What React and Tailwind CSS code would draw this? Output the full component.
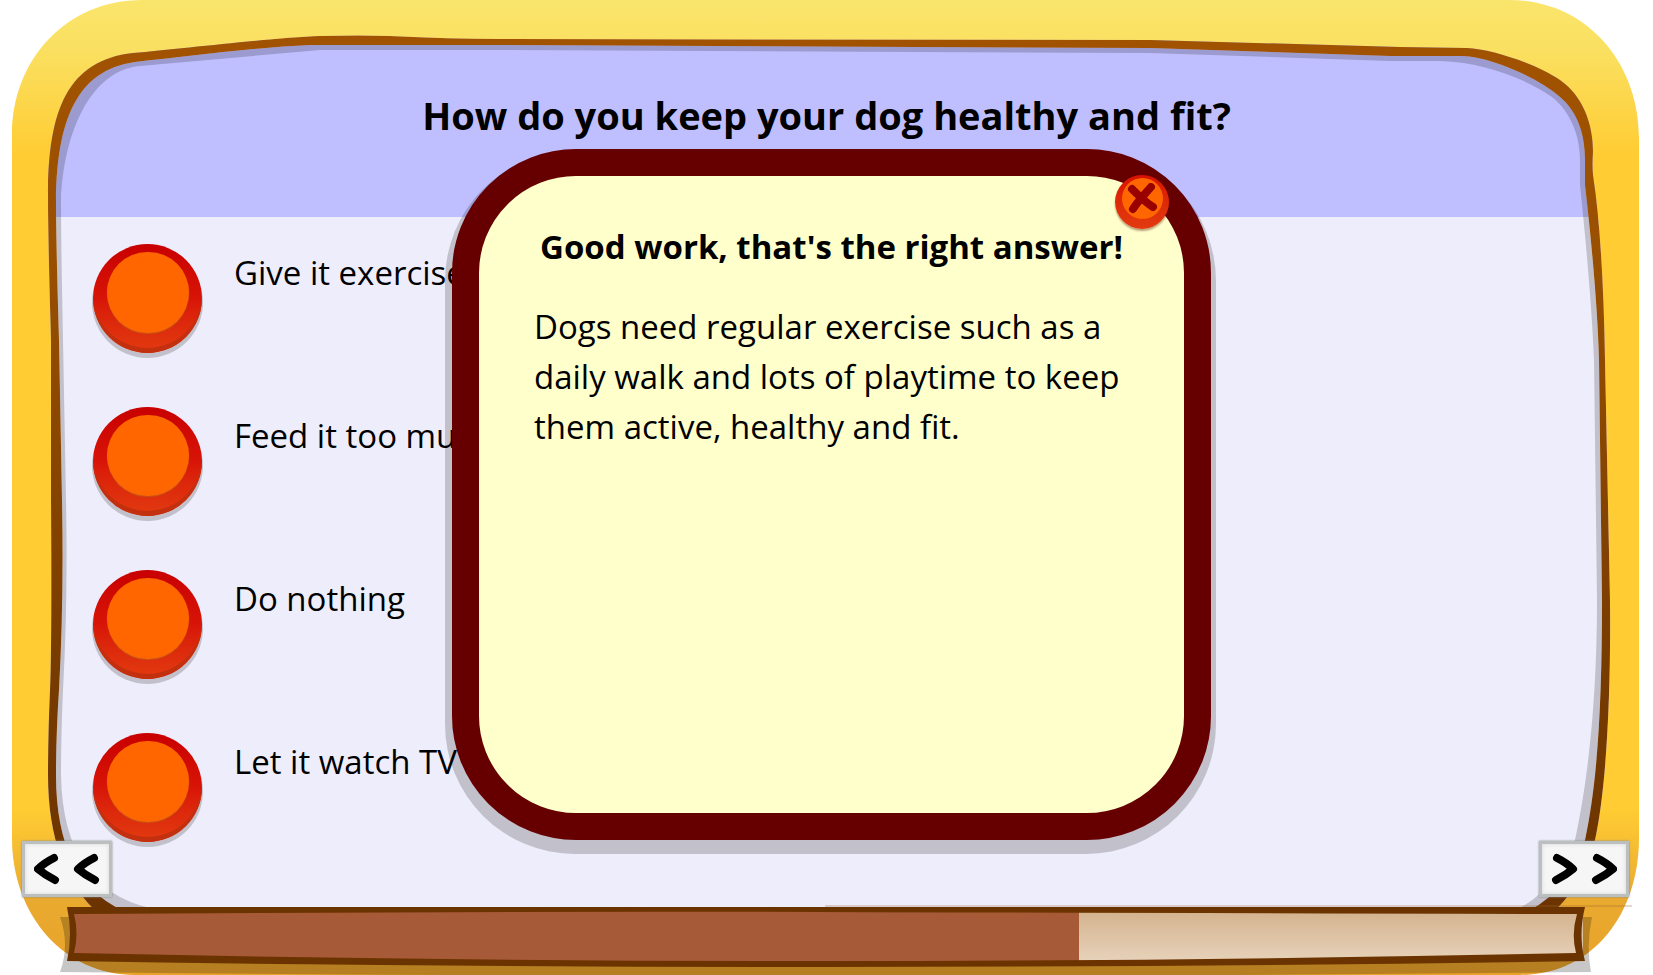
import { useState } from "react";

const QUESTION = "How do you keep your dog healthy and fit?";

const ANSWERS = [
  { id: "exercise", text: "Give it exercise" },
  { id: "food", text: "Feed it too much" },
  { id: "nothing", text: "Do nothing" },
  { id: "tv", text: "Let it watch TV" },
];

const PROGRESS = { done: 2, total: 3 };

// Hand-drawn outlines of the board, from the outside in
const FRAME =
  "M12 135 C12 60 66 0 142 0 H1509 C1586 0 1639 62 1639 138 V838 C1639 915 1592 975 1520 975 H135 C64 975 12 915 12 838 Z";
const RIM =
  "M48 195 C48 110 68 60 133 53 C180 49 270 38 320 36 Q360 35 390 36 Q450 39 500 39 L1150 40 L1400 47 L1467 48 C1492 49 1536 64 1560 80 C1583 96 1593 124 1593 152 Q1592 165 1593 175 Q1603 240 1605 360 L1610 600 C1611 700 1606 790 1595 840 Q1580 890 1550 915 H100 Q48 870 48 775 Q48 735 50 690 Q52 640 51 500 L51 340 Q48 240 48 195 Z";
const SURFACE =
  "M56 200 C57 122 76 70 135 62 C190 56 260 47 310 45 Q350 45 500 45 L1150 48 L1390 56 L1462 56 C1492 57 1538 78 1560 97 C1578 112 1585 135 1585 160 Q1585 175 1585 185 Q1597 290 1599 360 L1602 600 C1602 700 1598 780 1585 840 Q1568 890 1530 910 H122 Q56 880 56 775 Q56 735 59 690 Q64 600 62 500 L59 340 Q56 240 56 200 Z";
const SHADOW =
  "M61 200 C64 130 92 70 140 66 L320 50 H500 L1150 53 L1390 61 H1440 C1485 62 1530 81 1552 97 C1572 113 1580 138 1580 160 V185 Q1591 290 1594 360 L1597 600 C1597 700 1588 780 1575 840 Q1560 885 1520 908 H150 Q63 888 61 775 Q61 735 63 690 Q68 600 66 500 L63 340 Q61 240 61 200 Z";
const TRAY_OUTER = "M67 907 H1585 Q1578 935 1585 961 Q1200 967 820 967 Q440 967 67 961 Q73 934 67 907 Z";
const TRAY_INNER = "M74 914 Q500 911 820 912 T1577 914 Q1571 934 1576 953 Q1200 961 820 961 Q440 961 74 953 Q79 934 74 914 Z";

function BoardFrame() {
  return (
    <svg
      className="pointer-events-none absolute inset-0 h-full w-full"
      viewBox="0 0 1653 975"
      preserveAspectRatio="none"
      aria-hidden="true"
    >
      <defs>
        <linearGradient id="wood" x1="0" y1="0" x2="0" y2="975" gradientUnits="userSpaceOnUse">
          <stop offset="0" stopColor="#fae56c" />
          <stop offset="0.05" stopColor="#fae061" />
          <stop offset="0.16" stopColor="#ffcc33" />
          <stop offset="0.83" stopColor="#ffcc33" />
          <stop offset="0.92" stopColor="#e9aa30" />
          <stop offset="1" stopColor="#e9a22a" />
        </linearGradient>
        <linearGradient id="rim" x1="0" y1="0" x2="0" y2="975" gradientUnits="userSpaceOnUse">
          <stop offset="0" stopColor="#a35300" />
          <stop offset="0.25" stopColor="#995000" />
          <stop offset="0.7" stopColor="#773b00" />
          <stop offset="1" stopColor="#693100" />
        </linearGradient>
      </defs>
      <path d={`${SURFACE} ${SHADOW}`} fillRule="evenodd" fill="#000" fillOpacity="0.19" />
      <path d={`${FRAME} ${RIM}`} fillRule="evenodd" fill="url(#wood)" />
      <path d={`${RIM} ${SURFACE}`} fillRule="evenodd" fill="url(#rim)" />
      <path d="M825 906 H1632" stroke="#9c6a2c" strokeOpacity="0.5" />
    </svg>
  );
}

function TrayShadow() {
  return (
    <svg
      className="pointer-events-none absolute inset-0 h-full w-full"
      viewBox="0 0 1653 975"
      preserveAspectRatio="none"
      aria-hidden="true"
    >
      <path d="M60 917 H1592 Q1586 945 1591 972 Q820 980 60 972 Q70 945 60 917 Z" fill="#000" fillOpacity="0.22" />
    </svg>
  );
}

function TrayOutline() {
  return (
    <svg
      className="pointer-events-none absolute inset-0 h-full w-full"
      viewBox="0 0 1653 975"
      preserveAspectRatio="none"
      aria-hidden="true"
    >
      <path d={`${TRAY_OUTER} ${TRAY_INNER}`} fillRule="evenodd" fill="#6b3300" />
    </svg>
  );
}

function AnswerOption({ answer, onPick }) {
  return (
    <li className="flex items-start gap-8">
      <button
        type="button"
        aria-labelledby={`answer-${answer.id}`}
        onClick={() => onPick(answer.id)}
        className="flex h-[109px] w-[109px] shrink-0 justify-center rounded-full bg-linear-to-b from-[#c80000] via-[#d81408] to-[#e23a10] pt-2 shadow-[0_4px_0_1px_rgba(0,0,0,0.19),inset_0_-5px_0_#c23010]"
      >
        <span className="h-[81px] w-[82px] rounded-full bg-[#ff6600] shadow-[0_1px_1px_#c4561a]" />
      </button>
      <span id={`answer-${answer.id}`} className="pt-1 text-[33px] leading-[50px] whitespace-nowrap">
        {answer.text}
      </span>
    </li>
  );
}

function FeedbackDialog({ onClose }) {
  return (
    <div className="absolute inset-x-0 top-[149px] z-20 flex justify-center pl-2.5">
      <div
        role="dialog"
        aria-labelledby="feedback-title"
        className="relative h-[691px] w-[759px] rounded-[124px] border-[27px] border-[#660000] bg-[#ffffcc] px-[55px] pt-[46px] shadow-[-1px_8px_0_6px_rgba(0,0,0,0.19)]"
      >
        <h2 id="feedback-title" className="text-center text-[33px] leading-[50px] font-bold whitespace-nowrap">
          Good work, that's the right answer!
        </h2>
        <p className="mt-[30px] text-[33px] leading-[50px]">
          Dogs need regular exercise such as a daily walk and lots of playtime to keep them active, healthy and fit.
        </p>
        <button
          type="button"
          aria-label="Close"
          onClick={onClose}
          className="absolute -top-px right-[15px] flex h-[54px] w-[54px] justify-center rounded-full bg-linear-to-b from-[#d81000] to-[#e23a10] pt-[3px] shadow-[0_2px_2px_rgba(80,20,0,0.4)]"
        >
          <span className="flex h-[41px] w-[41px] items-center justify-center rounded-full bg-[#ff6600]">
            <svg className="h-8 w-8" viewBox="0 0 32 32" fill="none" stroke="#990000" strokeWidth="8" strokeLinecap="round">
              <path d="M6 6 C11 11 19 19 27 24 M25 4 C19 11 12 18 7 26" />
            </svg>
          </span>
        </button>
      </div>
    </div>
  );
}

function ChevronPair({ className }) {
  return (
    <svg
      className={className}
      width="66"
      height="34"
      viewBox="0 0 66 34"
      fill="none"
      stroke="#000"
      strokeWidth="8"
      strokeLinecap="round"
      strokeLinejoin="round"
      aria-hidden="true"
    >
      <path d="M20 6 Q10 11 4 17 Q11 23 21 28 M60 6 Q50 11 44 17 Q51 23 61 28" />
    </svg>
  );
}

export default function App() {
  const [showFeedback, setShowFeedback] = useState(true);

  return (
    <div className="relative flex min-h-screen flex-col overflow-hidden bg-white pt-10 pb-[14px] font-['Comic_Sans_MS','Open_Sans',sans-serif] text-black">
      {/* Question */}
      <header className="mx-12 h-[177px] rounded-t-3xl bg-[#bfbfff] pt-[50px]">
        <h1 className="text-center text-[38px] leading-[50px] font-bold">{QUESTION}</h1>
      </header>

      {/* Answers */}
      <main className="mx-12 flex-1 bg-[#eeedfb] pt-[27px] pl-[45px]">
        <ul className="flex flex-col gap-[54px]">
          {ANSWERS.map((answer) => (
            <AnswerOption key={answer.id} answer={answer} onPick={() => setShowFeedback(true)} />
          ))}
        </ul>
      </main>

      <BoardFrame />
      <TrayShadow />

      {/* Progress tray */}
      <div
        role="progressbar"
        aria-label="Quiz progress"
        aria-valuemin={0}
        aria-valuemax={PROGRESS.total}
        aria-valuenow={PROGRESS.done}
        className="relative mx-[70px] h-[54px] bg-linear-to-b from-[#d3b08a] to-[#e6d2ba]"
      >
        <div className="h-full bg-[#a65a37]" style={{ width: `${(PROGRESS.done / PROGRESS.total) * 100}%` }} />
      </div>
      <TrayOutline />

      {/* Page turners, pinned on the frame */}
      <button
        type="button"
        aria-label="Previous question"
        className="absolute bottom-[78px] left-[22px] z-10 flex h-[56px] w-[90px] items-center justify-center border-[3px] border-[#bcbfbf] bg-[#f6f6f6] shadow-[0_0_2px_#888,inset_0_0_4px_#d8d8d8]"
      >
        <ChevronPair />
      </button>
      <button
        type="button"
        aria-label="Next question"
        className="absolute right-[24px] bottom-[78px] z-10 flex h-[56px] w-[90px] items-center justify-center border-[3px] border-[#bcbfbf] bg-[#f6f6f6] shadow-[0_0_2px_#888,inset_0_0_4px_#d8d8d8]"
      >
        <ChevronPair className="-scale-x-100" />
      </button>

      {showFeedback && <FeedbackDialog onClose={() => setShowFeedback(false)} />}
    </div>
  );
}
